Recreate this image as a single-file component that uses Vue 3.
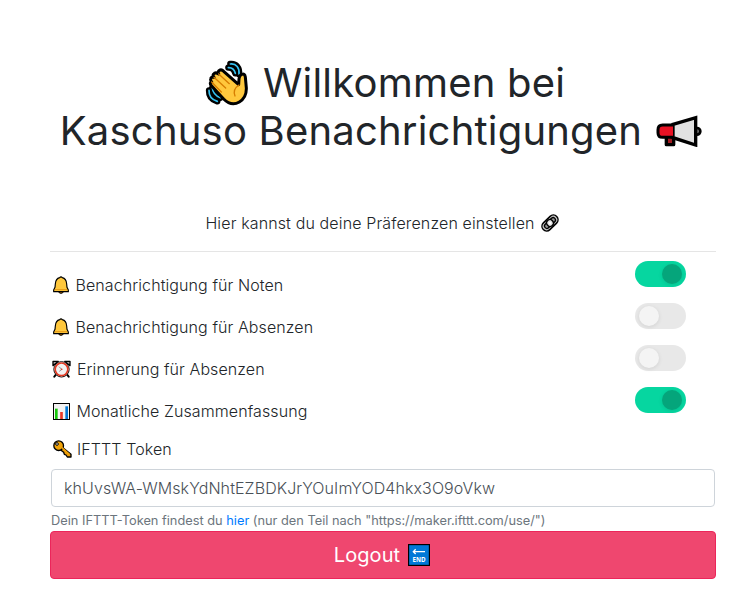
<script setup>
import { ref } from 'vue'

const options = ref([
  { icon: 'bell', label: 'Benachrichtigung für Noten', on: true },
  { icon: 'bell', label: 'Benachrichtigung für Absenzen', on: false },
  { icon: 'clock', label: 'Erinnerung für Absenzen', on: false },
  { icon: 'chart', label: 'Monatliche Zusammenfassung', on: true },
])
const token = ref('khUvsWA-WMskYdNhtEZBDKJrYOuImYOD4hkx3O9oVkw')
</script>

<template>
  <main class="page">
    <h1 class="title">
      <span class="line">
        <svg class="wave" viewBox="0 0 132 141">
          <g fill="none" stroke-linecap="round" stroke-linejoin="round">
            <path d="M76 12C94 10 104 24 102 42M70 23Q86 22 91 40M12 91Q11 117 37 124M22 84Q24 105 46 113" stroke="#000" stroke-width="19" />
            <path d="M76 12C94 10 104 24 102 42M70 23Q86 22 91 40M12 91Q11 117 37 124M22 84Q24 105 46 113" stroke="#35c1f1" stroke-width="5" />
          </g>
          <path d="M56 34Q49 26 42 32Q37 37 41 42Q31 35 26 42Q22 47 27 52Q18 50 17 57Q16 61 20 66Q13 68 18 76L56 117Q79 140 103 126Q125 113 124 84L121 51Q119 40 111 43Q103 45 102 57L101 74Z" fill="#ffc83d" stroke="#000" stroke-width="9" stroke-linejoin="round" />
          <path d="M41 42L73 71M27 52L62 84M20 66L49 96M102 75Q82 88 90 108" fill="none" stroke="#d67d00" stroke-width="4" stroke-linecap="round" />
        </svg>
        <span>Willkommen bei</span>
      </span>
      <span class="line second">
        <span>Kaschuso Benachrichtigungen</span>
        <svg class="horn" viewBox="0 0 138 96">
          <circle cx="123" cy="49" r="10" fill="#777" stroke="#000" stroke-width="8" />
          <path d="M31 64V89H53V69" fill="#a51c22" stroke="#000" stroke-width="10" stroke-linejoin="round" />
          <path d="M51 28L119 8V90L51 68Z" fill="#e1e1e1" stroke="#000" stroke-width="10" />
          <path d="M51 30H20Q6 30 6 44V53Q6 67 20 67H51Z" fill="#e81224" />
          <path d="M51 30H20Q6 30 6 44V53Q6 67 20 67H51" fill="none" stroke="#000" stroke-width="9" />
        </svg>
      </span>
    </h1>

    <p class="lead">
      <span>Hier kannst du deine Präferenzen einstellen</span>
      <svg class="link" viewBox="0 0 60 60">
        <g transform="rotate(-44 30 30)" fill="none">
          <rect x="2" y="16" width="56" height="28" rx="14" stroke="#000" stroke-width="4.500" fill="#c8c8c8" />
          <rect x="10" y="23" width="40" height="14" rx="7" stroke="#000" stroke-width="4" fill="#999" />
          <rect x="20" y="20" width="20" height="20" rx="9" stroke="#000" stroke-width="4" fill="#ddd" />
          <circle cx="30" cy="30" r="4.500" fill="#fff" />
        </g>
      </svg>
    </p>
    <hr class="rule">

    <section class="options">
      <div v-for="(option, i) in options" :key="i" class="option">
        <span class="label">
          <svg v-if="option.icon === 'bell'" class="bell" viewBox="0 0 48 54">
            <path d="M17 47Q18 52 24 52Q30 52 31 47Z" fill="#d67d00" stroke="#000" stroke-width="3" />
            <path d="M20 5Q24 0 28 5Q40 8 41 24L42 34L46 42V47H2V42L6 34L7 24Q8 8 20 5Z" fill="#ffc83d" stroke="#000" stroke-width="3.5" stroke-linejoin="round" />
            <path d="M5 41H43" stroke="#d67d00" stroke-width="2" />
          </svg>
          <svg v-else-if="option.icon === 'clock'" class="clock" viewBox="0 0 57 54">
            <path d="M13 42L7 50M44 42L50 50" stroke="#000" stroke-width="6" stroke-linecap="round" />
            <path d="M3 17V4H19ZM54 17V4H38Z" fill="#aaa" stroke="#000" stroke-width="4" stroke-linejoin="round" />
            <circle cx="28.5" cy="28" r="23" fill="#fff" stroke="#000" stroke-width="3" />
            <circle cx="28.5" cy="28" r="19" fill="#f2f2f2" stroke="#e33a23" stroke-width="5" />
            <path d="M21 20L29 28L22 34" fill="none" stroke="#777" stroke-width="2.5" />
            <circle cx="29" cy="28" r="2.5" fill="#e33a23" />
          </svg>
          <svg v-else class="chart" viewBox="0 0 51 51">
            <rect x="1.5" y="1.5" width="48" height="48" fill="#f2f2f2" stroke="#000" stroke-width="3" />
            <path d="M10 17V48" stroke="#16c60c" stroke-width="8" />
            <path d="M25.500 27V48" stroke="#e83a28" stroke-width="8" />
            <path d="M41 10V48" stroke="#0078d7" stroke-width="8" />
          </svg>
          <span>{{ option.label }}</span>
        </span>
        <button
          type="button"
          role="switch"
          class="switch"
          :class="{ on: option.on }"
          :aria-checked="option.on"
          @click="option.on = !option.on"
        ><span class="knob" /></button>
      </div>
    </section>

    <section class="token">
      <label class="token-label" for="token">
        <svg class="key" viewBox="0 0 57 54">
          <path d="M26 20L54 43V51H43L39 45L34 43L32 37L22 29" fill="#e89a08" stroke="#000" stroke-width="4" stroke-linejoin="round" />
          <circle cx="17" cy="17" r="14.500" fill="#f0a30a" stroke="#000" stroke-width="4" />
          <path d="M25 21L49 43" stroke="#f0a30a" stroke-width="5" />
          <circle cx="12" cy="12" r="4" fill="#fff" stroke="#000" stroke-width="3" />
        </svg>
        <span>IFTTT Token</span>
      </label>
      <input id="token" v-model="token" class="field" type="text" spellcheck="false">
      <small class="hint">Dein IFTTT-Token findest du <a>hier</a> (nur den Teil nach "https://maker.ifttt.com/use/")</small>
    </section>

    <button type="button" class="logout">
      <span>Logout</span>
      <svg class="end" viewBox="0 0 66 66">
        <rect x="1.500" y="1.500" width="63" height="63" fill="#0078d7" stroke="#000" stroke-width="4" />
        <path d="M16 23H51M23 16L16 23L23 30" fill="none" stroke="#fff" stroke-width="4" />
        <text x="33" y="55" text-anchor="middle" textLength="39" lengthAdjust="spacingAndGlyphs">END</text>
      </svg>
    </button>
  </main>
</template>

<style>
body {
  margin: 0;
  background: #fff;
}
</style>

<style scoped>
.page {
  box-sizing: border-box;
  width: 756px;
  height: 616px;
  padding: 59px 40px 0 50px;
  font: 300 16px/24px Inter, "Liberation Sans", sans-serif;
  letter-spacing: 0.09px;
  color: #212529;
}
svg {
  flex: none;
  display: block;
}
.title {
  margin: 0;
  font-size: 40px;
  font-weight: 400;
  line-height: 48px;
  letter-spacing: 0.2px;
}
.line {
  display: flex;
  align-items: center;
  justify-content: center;
  gap: 14px;
  height: 48px;
  padding-left: 4px;
  white-space: nowrap;
}
.line.second {
  padding: 0 4px 0 0;
}
.wave {
  width: 44px;
  height: 47px;
}
.horn {
  width: 46px;
  height: 32px;
}
.lead {
  display: flex;
  align-items: center;
  justify-content: center;
  gap: 5px;
  height: 24px;
  margin: 56px 0 16px;
  padding-right: 1px;
  letter-spacing: 0.13px;
}
.link {
  width: 20px;
  height: 20px;
}
.rule {
  height: 1px;
  margin: 0 0 9px;
  border: 0;
  background: #e5e5e5;
}
.option {
  display: flex;
  justify-content: space-between;
  height: 42px;
  padding: 0 30px 0 3px;
}
.label {
  display: flex;
  align-items: center;
  height: 24px;
  margin-top: 12px;
}
.bell {
  width: 16px;
  height: 18px;
  margin-right: 6.5px;
}
.clock {
  width: 19px;
  height: 18px;
  margin: 0 6px 0 -1px;
}
.chart {
  width: 17px;
  height: 17px;
  margin: 0 7px 0 -0.5px;
}
.switch {
  width: 51px;
  height: 26px;
  padding: 3px 4px;
  border: 0;
  border-radius: 13px;
  background: #e8e8e8;
}
.knob {
  display: block;
  width: 20px;
  height: 20px;
  border-radius: 50%;
  background: #f4f4f4;
  box-shadow: 0 1px 4px rgba(0, 0, 0, 0.1);
}
.switch.on {
  background: #06d6a0;
}
.switch.on .knob {
  margin-left: 23px;
  background: #05a57b;
}
.token {
  padding: 8px 1px 0;
}
.token-label {
  display: flex;
  align-items: center;
  gap: 5px;
  height: 24px;
  padding-left: 2px;
}
.key {
  width: 19px;
  height: 18px;
}
.field {
  display: block;
  box-sizing: border-box;
  width: 100%;
  height: 38px;
  margin-top: 8px;
  padding: 6px 12px;
  border: 1px solid #ced4da;
  border-radius: 4px;
  outline: 0;
  font: inherit;
  letter-spacing: inherit;
  color: #495057;
  background: #fff;
}
.hint {
  display: block;
  height: 24px;
  font-size: 12.8px;
  font-weight: 400;
  line-height: 27px;
  letter-spacing: 0;
  white-space: nowrap;
  color: #6c757d;
}
.hint a {
  color: #007bff;
}
.logout {
  display: flex;
  align-items: center;
  justify-content: center;
  gap: 8px;
  box-sizing: border-box;
  width: 100%;
  height: 48px;
  padding: 0 2px 0 0;
  border: 1px solid #ec255a;
  border-radius: 4px;
  background: #ef476f;
  color: #fff;
  font: 400 20px/30px Inter, "Liberation Sans", sans-serif;
  letter-spacing: 0.1px;
}
.end {
  width: 22px;
  height: 22px;
}
.end text {
  font: 700 22px "Open Sans", sans-serif;
  letter-spacing: 0;
  fill: #fff;
}
</style>
